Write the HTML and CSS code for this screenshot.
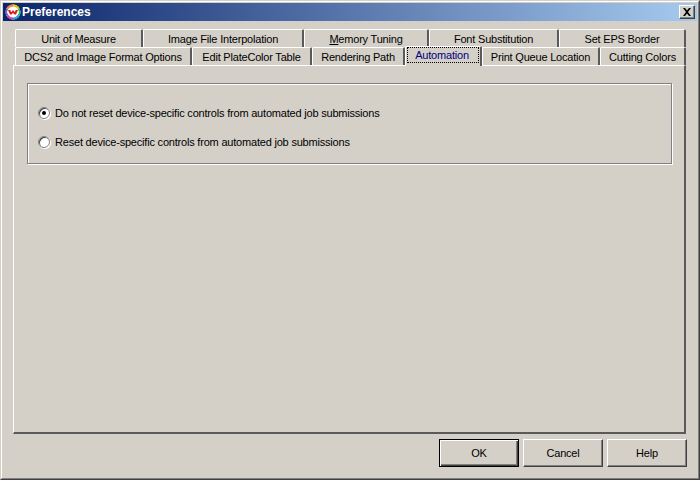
FILE: index.html
```html
<!DOCTYPE html>
<html lang="en">
<head>
<meta charset="utf-8">
<title>Preferences</title>
<link rel="stylesheet" href="styles.css">
</head>
<body>
<div class="window">
  <div class="frame">
    <header class="titlebar">
      <svg class="logo" width="16" height="16" viewBox="0 0 16 16" aria-hidden="true">
        <circle cx="8" cy="8" r="7.500" fill="#fff"/>
        <path d="M8 .5a7.500 7.500 0 0 1 6.500 3.750l-1.700 1A5.500 5.500 0 0 0 8 2.500z" fill="#f2c200"/>
        <path d="M14.500 4.250a7.500 7.500 0 0 1 0 7.500l-1.700-1a5.500 5.500 0 0 0 0-5.500z" fill="#22b573"/>
        <path d="M14.500 11.750A7.500 7.500 0 0 1 8 15.500v-2a5.500 5.500 0 0 0 4.800-2.750z" fill="#1fa5e0"/>
        <path d="M8 15.500a7.500 7.500 0 0 1-6.500-3.750l1.700-1A5.500 5.500 0 0 0 8 13.500z" fill="#d63fa8"/>
        <path d="M1.500 11.750a7.500 7.500 0 0 1 0-7.500l1.700 1a5.500 5.500 0 0 0 0 5.500z" fill="#6a5ad0"/>
        <path d="M1.500 4.250A7.500 7.500 0 0 1 8 .5v2a5.500 5.500 0 0 0-4.800 2.750z" fill="#f08030"/>
        <ellipse cx="8" cy="8" rx="5.800" ry="4" fill="#fff"/>
        <path d="M3 6h2.200l1 2.300L8 6l1.800 2.300 1-2.300H13l-2 4.500H9.400L8 8.700l-1.400 1.800H5z" fill="#e01818"/>
      </svg>
      <span class="title">Preferences</span>
      <button class="close" type="button" aria-label="Close">
        <svg width="10" height="8" viewBox="0 0 10 8"><path d="M1 0h2l2 2.500L7 0h2L6 4l3 4H7L5 5.500 3 8H1l3-4z" fill="#000"/></svg>
      </button>
    </header>

    <div class="tabs">
      <div class="tabrow">
        <div class="tab w-unit">Unit of Measure</div>
        <div class="tab w-interp">Image File Interpolation</div>
        <div class="tab w-memory"><span><u>M</u>emory Tuning</span></div>
        <div class="tab w-font">Font Substitution</div>
        <div class="tab w-eps">Set EPS Border</div>
      </div>
      <div class="tabrow">
        <div class="tab w-dcs">DCS2 and Image Format Options</div>
        <div class="tab w-plate">Edit PlateColor Table</div>
        <div class="tab w-render">Rendering Path</div>
        <div class="tab tab-active w-auto"><span class="focus">Automation</span></div>
        <div class="tab w-queue">Print Queue Location</div>
        <div class="tab w-cut">Cutting Colors</div>
      </div>
    </div>

    <main class="panel">
      <section class="group">
        <label class="option">
          <span class="radio radio-on"></span>
          <span>Do not reset device-specific controls from automated job submissions</span>
        </label>
        <label class="option">
          <span class="radio"></span>
          <span>Reset device-specific controls from automated job submissions</span>
        </label>
      </section>
    </main>

    <footer class="actions">
      <button class="btn btn-default" type="button">OK</button>
      <button class="btn" type="button">Cancel</button>
      <button class="btn" type="button">Help</button>
    </footer>
  </div>
</div>
</body>
</html>
```

FILE: styles.css
```css
* { box-sizing: border-box; }
html, body { margin: 0; padding: 0; }
body {
  width: 700px;
  height: 480px;
  overflow: hidden;
  font: 11px/14px "Liberation Sans", Arial, sans-serif;
  letter-spacing: -0.2px;
  color: #000;
  background: #d4d0c8;
}
.window {
  width: 700px;
  height: 480px;
  border: 1px solid;
  border-color: #d4d0c8 #404040 #404040 #d4d0c8;
}
.frame {
  height: 100%;
  border: 1px solid;
  border-color: #fff #808080 #808080 #fff;
  padding: 1px;
  display: flex;
  flex-direction: column;
}
.titlebar {
  height: 18px;
  flex: none;
  display: flex;
  align-items: center;
  padding: 0 2px;
  background: linear-gradient(90deg, #0a246a, #a6caef);
}
.logo { flex: none; }
.title {
  margin-left: 1px;
  flex: 1;
  color: #fff;
  font: bold 12px/14px "Liberation Sans", Arial, sans-serif;
  letter-spacing: 0;
}
.close {
  width: 16px;
  height: 14px;
  padding: 0;
  background: #d4d0c8;
  display: flex;
  align-items: center;
  justify-content: center;
  border: 1px solid;
  border-color: #fff #404040 #404040 #fff;
  box-shadow: inset -1px -1px 0 #808080;
}
.tabs { margin: 8px 0 0 12px; flex: none; }
.tabrow { display: flex; height: 18px; }
.tab {
  height: 18px;
  display: flex;
  align-items: center;
  justify-content: center;
  white-space: nowrap;
  padding-top: 1px;
  background: #d4d0c8;
  border: solid;
  border-width: 1px 2px 0 1px;
  border-color: #fff #5a5a5a #d4d0c8 #fff;
  border-radius: 2px 2px 0 0;
}
.w-unit { width: 128px; }
.w-interp { width: 161px; }
.w-memory { width: 125px; }
.w-font { width: 130px; }
.w-eps { width: 127px; }
.w-dcs { width: 177px; }
.w-plate { width: 120px; }
.w-render { width: 93px; }
.w-auto { width: 77px; }
.w-queue { width: 118px; }
.w-cut { width: 86px; }
.tab-active {
  height: 20px;
  margin-top: -1px;
  color: #00007f;
  align-items: flex-start;
  padding: 0 1px;
  position: relative;
  z-index: 1;
}
.focus {
  width: 100%;
  height: 16px;
  padding-right: 2px;
  text-align: center;
  border: 1px dotted #000;
  line-height: 14px;
}
.panel {
  margin-left: 10px;
  width: 673px;
  height: 369px;
  flex: none;
  padding: 17px 12px 0 13px;
  border: solid;
  border-width: 1px 2px 2px 1px;
  border-color: #fff #5a5a5a #5a5a5a #fff;
}
.group {
  height: 81px;
  width: 645px;
  padding: 22px 0 0 10px;
  border: 1px solid #808080;
  box-shadow: 1px 1px 0 #fff, inset 1px 1px 0 #fff;
  display: flex;
  flex-direction: column;
  gap: 15px;
}
.option {
  display: flex;
  align-items: center;
  gap: 5px;
  height: 14px;
}
.radio {
  width: 12px;
  height: 12px;
  flex: none;
  border-radius: 50%;
  background: #fff;
  border: 1px solid #808080;
  box-shadow: inset 1px 1px 0 #404040, 1px 1px 0 #fff;
  display: flex;
  align-items: center;
  justify-content: center;
}
.radio-on::after {
  content: "";
  width: 4px;
  height: 4px;
  border-radius: 50%;
  background: #000;
}
.actions {
  margin-top: 5px;
  display: flex;
  gap: 4px;
  padding-left: 436px;
}
.btn {
  width: 80px;
  height: 28px;
  padding: 0;
  font: inherit;
  letter-spacing: inherit;
  color: #000;
  background: #d4d0c8;
  border: 1px solid;
  border-color: #fff #404040 #404040 #fff;
  box-shadow: inset -1px -1px 0 #808080;
}
.btn-default {
  border: 1px solid #000;
  box-shadow: inset 1px 1px 0 #fff, inset -1px -1px 0 #404040, inset -2px -2px 0 #808080;
}
```
